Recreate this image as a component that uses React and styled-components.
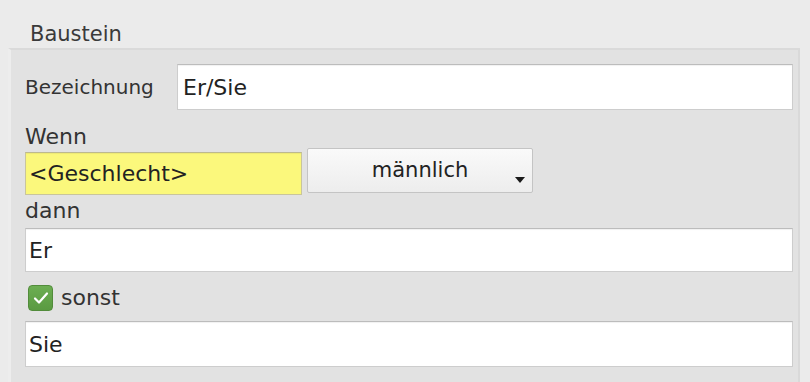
import React from "react";
import styled, { createGlobalStyle } from "styled-components";

const GlobalStyle = createGlobalStyle`
  html, body {
    margin: 0;
    padding: 0;
    background: #ebebeb;
  }
  body {
    font-family: "DejaVu Sans", "Liberation Sans", sans-serif;
    color: #333;
  }
`;

const Page = styled.div`
  width: 810px;
  height: 382px;
  overflow: hidden;
  display: flex;
  flex-direction: column;
`;

const Title = styled.div`
  height: 48px;
  box-sizing: border-box;
  padding: 23px 0 0 30px;
  font-size: 21px;
  line-height: 22px;
  color: #3a3a3a;
`;

const GroupBox = styled.div`
  flex: 1;
  margin-left: 8px;
  width: 792px;
  box-sizing: border-box;
  background: #e2e2e2;
  border-top: 2px solid #dadada;
  border-left: 3px solid #ededed;
  border-right: 2px solid #d9d9d9;
  padding: 14px 5px 0 14px;
  display: flex;
  flex-direction: column;
`;

const Row = styled.div`
  display: flex;
  align-items: ${(p) => p.align || "center"};
  gap: ${(p) => p.gap || 0}px;
  margin-top: ${(p) => p.top || 0}px;
`;

const Label = styled.div`
  font-size: ${(p) => p.size || 22}px;
  line-height: ${(p) => p.lh || 24}px;
  color: #333;
  width: ${(p) => (p.width ? `${p.width}px` : "auto")};
`;

const TextField = styled.div`
  flex: ${(p) => (p.width ? "none" : 1)};
  width: ${(p) => (p.width ? `${p.width}px` : "auto")};
  height: ${(p) => p.h || 44}px;
  box-sizing: border-box;
  background: ${(p) => (p.yellow ? "#fbf87c" : "#ffffff")};
  border: 1px solid ${(p) => (p.yellow ? "#c9c59c" : "#cdcdcd")};
  border-top-color: ${(p) => (p.yellow ? "#bdb98f" : "#bcbcbc")};
  box-shadow: inset 0 1px 1px rgba(0, 0, 0, 0.06);
  padding-left: ${(p) => p.pad || 3}px;
  display: flex;
  align-items: center;
  font-size: 22px;
  color: #222;
`;

const Dropdown = styled.div`
  position: relative;
  width: 226px;
  height: 45px;
  box-sizing: border-box;
  margin-top: -4px;
  border: 1px solid #c4c4c4;
  border-radius: 2px;
  background: linear-gradient(#fafafa, #ededed);
  display: flex;
  align-items: center;
  justify-content: center;
  padding-bottom: 2px;
  font-size: 21px;
  color: #222;
`;

const Arrow = styled.span`
  position: absolute;
  right: 7px;
  bottom: 9px;
  width: 0;
  height: 0;
  border-left: 5px solid transparent;
  border-right: 5px solid transparent;
  border-top: 6px solid #1a1a1a;
`;

const CheckBox = styled.span`
  width: 25px;
  height: 26px;
  box-sizing: border-box;
  margin-left: 3px;
  border-radius: 4px;
  background: linear-gradient(#6cae52, #5a9a41);
  border: 1px solid #528c3b;
  display: flex;
  align-items: center;
  justify-content: center;
`;

const App = () => {
  return (
    <Page>
      <GlobalStyle />
      <Title>Baustein</Title>
      <GroupBox>
        <Row gap={0}>
          <Label size={20} width={152}>Bezeichnung</Label>
          <TextField h={46} pad={5}>Er/Sie</TextField>
        </Row>
        <Label lh={26} style={{ marginTop: 14 }}>Wenn</Label>
        <Row align="flex-start" gap={5} top={2}>
          <TextField width={277} h={43} yellow>
            &lt;Geschlecht&gt;
          </TextField>
          <Dropdown>
            männlich
            <Arrow />
          </Dropdown>
        </Row>
        <Label lh={26} style={{ marginTop: 3 }}>dann</Label>
        <Row top={4}>
          <TextField h={44}>Er</TextField>
        </Row>
        <Row gap={8} top={12}>
          <CheckBox>
            <svg width="16" height="14" viewBox="0 0 16 14">
              <path
                d="M2 7.5 L6 11.5 L14 2.5"
                fill="none"
                stroke="#ffffff"
                strokeWidth="2.2"
                strokeLinecap="round"
                strokeLinejoin="round"
              />
            </svg>
          </CheckBox>
          <Label lh={28}>sonst</Label>
        </Row>
        <Row top={9}>
          <TextField h={46}>Sie</TextField>
        </Row>
      </GroupBox>
    </Page>
  );
};

export default App;
